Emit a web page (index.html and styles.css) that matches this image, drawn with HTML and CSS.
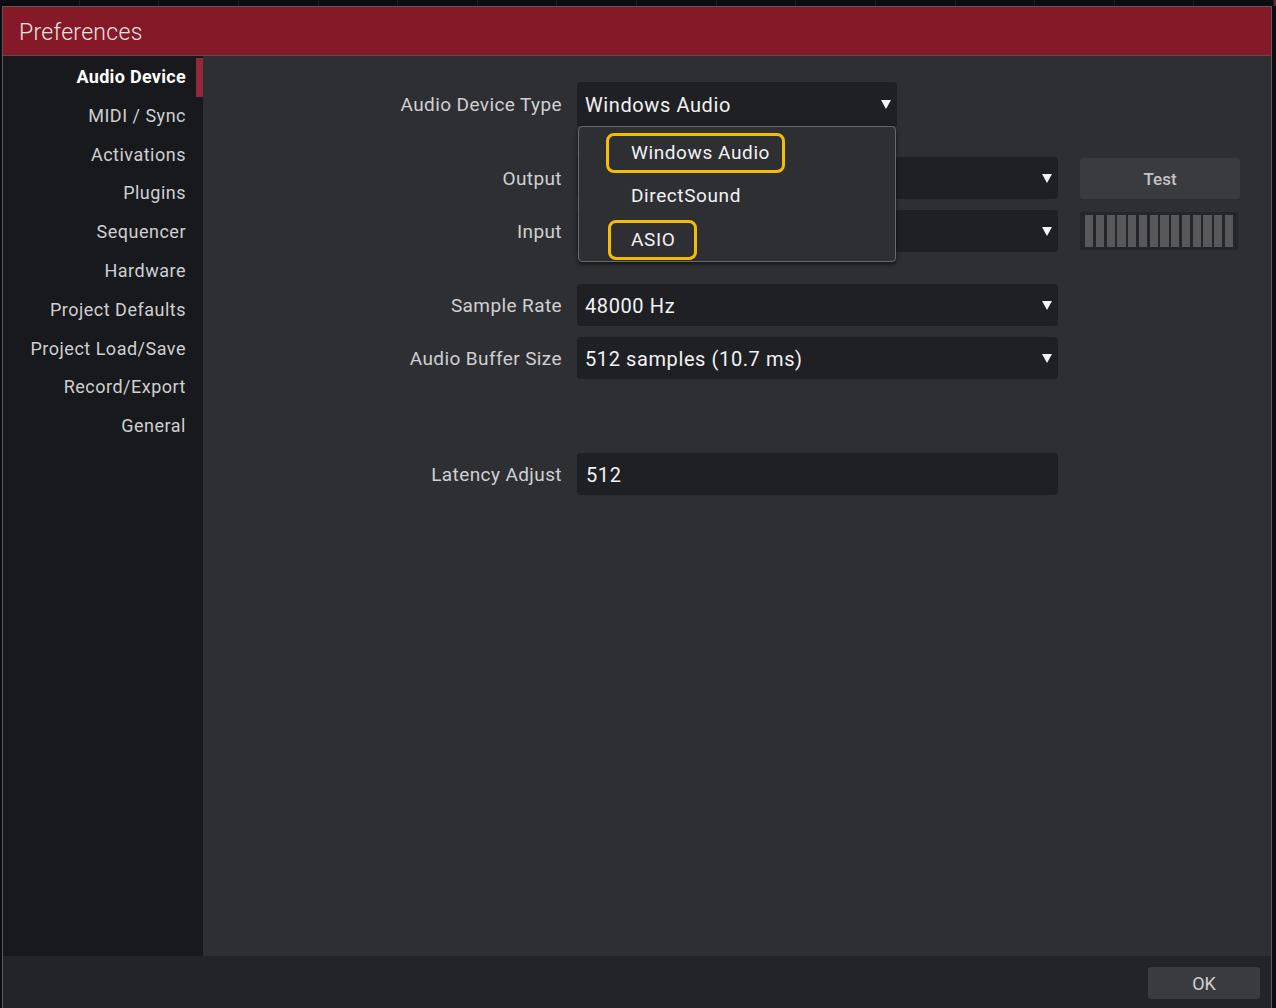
FILE: index.html
```html
<!DOCTYPE html>
<html lang="en">
<head>
    <meta charset="UTF-8">
    <meta name="viewport" content="width=device-width, initial-scale=1.0">
    <title>Preferences</title>
    <link rel="stylesheet" href="styles.css">
</head>
<body>
    <div id="backdrop">
        <div class="strip"></div><div class="strip"></div><div class="strip"></div><div class="strip"></div>
        <div class="strip"></div><div class="strip"></div><div class="strip"></div><div class="strip"></div>
        <div class="strip"></div><div class="strip"></div><div class="strip"></div><div class="strip"></div>
        <div class="strip"></div><div class="strip"></div><div class="strip"></div><div class="strip"></div>
    </div>
    <div id="window">
        <header id="titlebar">Preferences</header>
        <div id="body">
            <nav id="sidebar">
                <div class="nav-item active">Audio Device</div>
                <div class="nav-item">MIDI / Sync</div>
                <div class="nav-item">Activations</div>
                <div class="nav-item">Plugins</div>
                <div class="nav-item">Sequencer</div>
                <div class="nav-item">Hardware</div>
                <div class="nav-item">Project Defaults</div>
                <div class="nav-item">Project Load/Save</div>
                <div class="nav-item">Record/Export</div>
                <div class="nav-item">General</div>
            </nav>
            <main id="content">
                <div class="row row-type">
                    <label class="label">Audio Device Type</label>
                    <div class="select select-short">
                        <span>Windows Audio</span>
                        <span class="arrow"></span>
                        <div class="popup">
                            <div class="option"><span class="mark">Windows Audio</span></div>
                            <div class="option"><span>DirectSound</span></div>
                            <div class="option"><span class="mark mark-asio">ASIO</span></div>
                        </div>
                    </div>
                </div>
                <div class="row row-output">
                    <label class="label">Output</label>
                    <div class="select"><span></span><span class="arrow"></span></div>
                    <button class="btn btn-test">Test</button>
                </div>
                <div class="row row-input">
                    <label class="label">Input</label>
                    <div class="select"><span></span><span class="arrow"></span></div>
                    <div class="meter">
                        <i></i><i></i><i></i><i></i><i></i><i></i><i></i>
                        <i></i><i></i><i></i><i></i><i></i><i></i><i></i>
                    </div>
                </div>
                <div class="row row-rate">
                    <label class="label">Sample Rate</label>
                    <div class="select"><span>48000 Hz</span><span class="arrow"></span></div>
                </div>
                <div class="row row-buffer">
                    <label class="label">Audio Buffer Size</label>
                    <div class="select"><span>512 samples (10.7 ms)</span><span class="arrow"></span></div>
                </div>
                <div class="row row-latency">
                    <label class="label">Latency Adjust</label>
                    <div class="select field"><span>512</span></div>
                </div>
            </main>
        </div>
        <footer id="footer">
            <button class="btn btn-ok">OK</button>
        </footer>
    </div>
</body>
</html>
```

FILE: styles.css
```css
:root {
    --red: #851927;
    --red-accent: #93283a;
    --sidebar: #18191c;
    --panel: #2e2f33;
    --field: #1f2023;
    --footer: #232427;
    --button: #3a3b3f;
    --text: #d4d4d6;
    --yellow: #f6bc00;
}
html, body {
    margin: 0;
    height: 100%;
    overflow: hidden;
}
body {
    background-color: #0c0d10;
    font-family: Roboto, "Liberation Sans", sans-serif;
    color: var(--text);
    position: relative;
}
#backdrop {
    display: flex;
    height: 6px;
    border-right: 2px solid #6b2430;
}
.strip {
    flex: 1;
    border-right: 1px solid #1c1d21;
}
#window {
    margin-left: 2px;
    width: 1268px;
    height: 1002px;
    border: 1px solid #5b5a5f;
    border-bottom: none;
    display: flex;
    flex-direction: column;
    background-color: var(--panel);
}
#titlebar {
    height: 49px;
    flex: 0 0 49px;
    background-color: var(--red);
    border-bottom: 1px solid #5e4a4e;
    box-sizing: border-box;
    display: flex;
    align-items: center;
    padding: 3px 0 0 16px;
    font-size: 23px;
    font-weight: 300;
    color: #ece2e3;
    letter-spacing: 0.3px;
}
#body {
    flex: 1;
    display: flex;
    min-height: 0;
}
#sidebar {
    width: 200px;
    flex: 0 0 200px;
    background-color: var(--sidebar);
    padding-top: 2px;
}
.nav-item {
    height: 38.8px;
    line-height: 38.8px;
    text-align: right;
    padding-right: 10px;
    border-right: 7px solid transparent;
    font-size: 18px;
    letter-spacing: 0.5px;
    color: #cfcfd1;
}
.nav-item.active {
    border-right-color: var(--red-accent);
    color: #ffffff;
    font-weight: 700;
    letter-spacing: 0.3px;
}
#content {
    flex: 1;
    padding-top: 26px;
}
.row {
    display: flex;
    align-items: center;
    height: 42px;
}
.row-type { height: 44px; }
.row-output { margin-top: 31px; }
.row-input { margin-top: 11px; }
.row-rate { margin-top: 32px; }
.row-buffer { margin-top: 11px; }
.row-latency { margin-top: 74px; }
.label {
    width: 374px;
    flex: 0 0 374px;
    text-align: right;
    font-size: 19px;
    letter-spacing: 0.4px;
    color: #d0d0d2;
    padding-right: 15px;
    box-sizing: border-box;
}
.select {
    position: relative;
    width: 481px;
    height: 100%;
    background-color: var(--field);
    border-radius: 3px;
    display: flex;
    align-items: center;
    justify-content: space-between;
    padding: 2px 6px 0 8px;
    box-sizing: border-box;
    font-size: 20px;
    letter-spacing: 0.6px;
    color: #f2f2f3;
}
.select-short {
    width: 320px;
    border-radius: 3px 3px 0 0;
}
.field {
    padding-left: 9px;
}
.arrow {
    width: 0;
    height: 0;
    border-left: 5px solid transparent;
    border-right: 5px solid transparent;
    border-top: 9px solid #f4f4f4;
    margin-bottom: 2px;
}
.popup {
    position: absolute;
    top: 44px;
    left: 1px;
    width: 318px;
    height: 136px;
    box-sizing: border-box;
    background-color: var(--panel);
    border: 1px solid #6a6a6e;
    border-radius: 4px;
    box-shadow: 0 2px 4px rgba(0, 0, 0, 0.6);
    padding-top: 4px;
    z-index: 2;
    letter-spacing: 0.6px;
}
.option {
    height: 43.5px;
    display: flex;
    align-items: center;
    padding-left: 27px;
    font-size: 19px;
    color: #f2f2f3;
}
.option span {
    padding: 0 12px 0 22px;
    line-height: 34px;
    border: 3px solid transparent;
    border-radius: 8px;
}
.option .mark {
    border-color: var(--yellow);
}
.option .mark-asio {
    margin-left: 2px;
    padding: 0 19px 0 20px;
}
.btn {
    font-family: inherit;
    border: none;
    background-color: var(--button);
    border-radius: 3px;
    color: #c3c3c6;
    font-size: 17px;
}
.btn-test {
    margin-left: 22px;
    width: 160px;
    height: 41px;
    font-weight: 500;
    padding-top: 2px;
}
.meter {
    margin-left: 22px;
    width: 158px;
    height: 38px;
    background-color: #252629;
    border-radius: 2px;
    display: flex;
    align-items: center;
    gap: 2.5px;
    padding: 0 5px;
    box-sizing: border-box;
}
.meter i {
    flex: 1;
    height: 32px;
    background-color: #58585b;
}
#footer {
    height: 53px;
    flex: 0 0 53px;
    background-color: var(--footer);
    display: flex;
    justify-content: flex-end;
    align-items: flex-start;
    padding: 11px 11px 0 0;
    box-sizing: border-box;
}
.btn-ok {
    width: 112px;
    height: 32px;
    font-size: 18px;
    color: #d0d0d2;
}
```
